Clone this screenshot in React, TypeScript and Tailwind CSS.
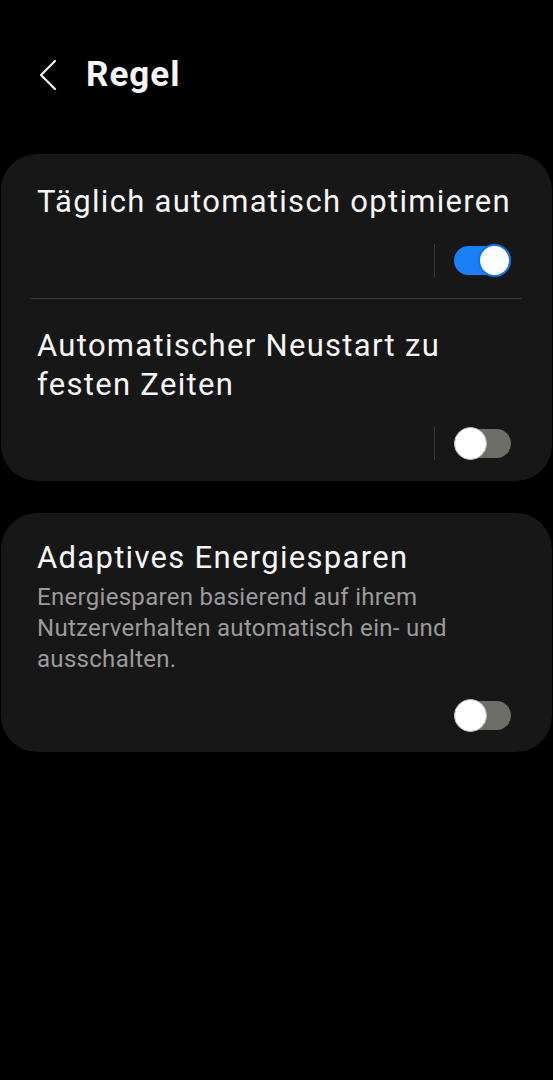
import React from "react";

function Toggle({ on }: { on: boolean }) {
  return (
    <div className="relative w-[57px] h-[33px]">
      <div
        className={
          "absolute left-0 right-0 top-[2px] bottom-[2px] rounded-full " +
          (on ? "bg-[#1a7ef7]" : "bg-[#6e6e69]")
        }
      />
      <div
        className={
          "absolute top-0 w-[33px] h-[33px] rounded-full bg-white " +
          (on ? "right-0 border-2 border-[#1272e6]" : "left-0 border border-[#bdbdbd]")
        }
      />
    </div>
  );
}

function ToggleRow({ on, sep }: { on: boolean; sep: boolean }) {
  return (
    <div className="flex items-center justify-end h-[34px] pr-[41px]">
      {sep && <div className="w-px h-[33px] bg-[#3a3a3a] mr-[19px]" />}
      <Toggle on={on} />
    </div>
  );
}

export default function App() {
  return (
    <div
      className="min-h-[1080px] w-full bg-black text-white"
      style={{ fontFamily: "Roboto, 'Noto Sans', sans-serif" }}
    >
      <div className="pt-[50px] h-[100px] flex items-center pl-[39px]">
        <svg width="18" height="30" viewBox="0 0 18 30" fill="none">
          <polyline
            points="16,1 2,15 16,29"
            stroke="#f2f2f2"
            strokeWidth="2.2"
            strokeLinecap="round"
            strokeLinejoin="round"
          />
        </svg>
        <div className="ml-[29px] text-[35px] font-bold leading-[50px] tracking-[1px] text-[#f5f5f5]">Regel</div>
      </div>

      <div className="mt-[54px] mx-px rounded-[36px] bg-[#171717]">
        <div className="pt-[28px] pl-[36px] pr-[20px] text-[31px] leading-[40px] tracking-[1.3px] text-[#f5f5f5] whitespace-nowrap">
          Täglich automatisch optimieren
        </div>
        <div className="mt-[21px]">
          <ToggleRow on={true} sep={true} />
        </div>
        <div className="mt-[21px] ml-[29px] mr-[30px] h-px bg-[#3a3a3a]" />
        <div className="pt-[27px] pl-[36px] pr-[60px] text-[31px] leading-[39px] tracking-[1.3px] text-[#f5f5f5]">
          Automatischer Neustart zu festen Zeiten
        </div>
        <div className="mt-[22px] pb-[21px]">
          <ToggleRow on={false} sep={true} />
        </div>
      </div>

      <div className="mt-[32px] mx-px rounded-[36px] bg-[#171717]">
        <div className="pt-[25px] pl-[36px] pr-[30px] text-[31px] leading-[40px] tracking-[1.3px] text-[#f5f5f5]">
          Adaptives Energiesparen
        </div>
        <div className="mt-[4px] pl-[36px] pr-[60px] text-[24px] leading-[31px] tracking-[0.3px] text-[#9b9b9b]">
          Energiesparen basierend auf ihrem Nutzerverhalten automatisch ein- und ausschalten.
        </div>
        <div className="mt-[23px] pb-[20px]">
          <ToggleRow on={false} sep={false} />
        </div>
      </div>
    </div>
  );
}
